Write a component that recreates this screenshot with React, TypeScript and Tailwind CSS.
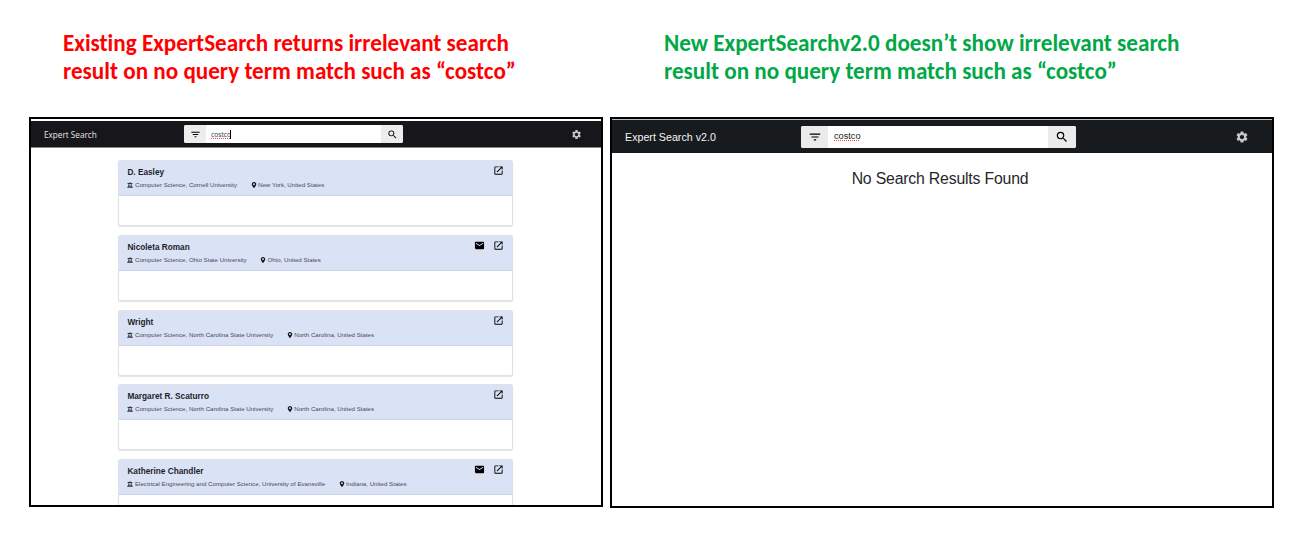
import React from "react";
import { MdEmail, MdFilterList, MdOpenInNew, MdSearch, MdSettings } from "react-icons/md";
import { FaMapMarkerAlt, FaUniversity } from "react-icons/fa";

type Expert = { name: string; dept: string; place: string; mail?: boolean };

const experts: Expert[] = [
  { name: "D. Easley", dept: "Computer Science, Cornell University", place: "New York, United States" },
  { name: "Nicoleta Roman", dept: "Computer Science, Ohio State University", place: "Ohio, United States", mail: true },
  { name: "Wright", dept: "Computer Science, North Carolina State University", place: "North Carolina, United States" },
  { name: "Margaret R. Scaturro", dept: "Computer Science, North Carolina State University", place: "North Carolina, United States" },
  { name: "Katherine Chandler", dept: "Electrical Engineering and Computer Science, University of Evansville", place: "Indiana, United States", mail: true },
];

function ExpertCard({ name, dept, place, mail }: Expert) {
  return (
    <article className="mb-[8.8px] h-[66px] w-[395.4px] shrink-0 overflow-hidden rounded-[2px] border border-[#dfe1e6] bg-white shadow-[0_1px_1px_#e4e4e8]">
      <div className="flex h-[35px] justify-between border-b border-[#cbd3e6] bg-[#dae2f6] pr-[8.4px] pl-[8.4px]">
        <div className="pt-[6px]">
          <h2 className="text-[8.25px] leading-[12px] font-bold whitespace-nowrap text-[#1d1f26]">{name}</h2>
          <div className="flex h-[12px] items-center text-[6.15px] leading-[12px] whitespace-nowrap text-[#484b55]">
            <FaUniversity className="mr-[1.6px] size-[6px] text-[#30323a]" />
            <span>{dept}</span>
            <FaMapMarkerAlt className="mr-[1.4px] ml-[13.6px] size-[6px] text-[#15161a]" />
            <span>{place}</span>
          </div>
        </div>
        <div className="flex gap-[8px] pt-[4px] text-black">
          {mail && <MdEmail className="size-[11px]" />}
          <MdOpenInNew className="size-[11px]" />
        </div>
      </div>
    </article>
  );
}

export default function App() {
  return (
    <main className="flex h-[544px] w-[1304px] gap-[7px] overflow-hidden bg-white pl-[29px] font-['Liberation_Sans',sans-serif]">
      <section className="w-[574px] shrink-0">
        <h1 className="h-[117px] pt-[29px] pl-[34px] font-['Carlito','Lato',sans-serif] text-[23.15px] leading-[28px] font-bold whitespace-nowrap text-[#ff0000] [font-variant-ligatures:none]">
          <span className="block w-fit">Existing ExpertSearch returns irrelevant search</span>
          <span className="block w-fit">result on no query term match such as “costco”</span>
        </h1>
        <div className="flex h-[390px] flex-col overflow-hidden border-2 border-black bg-white">
          <header className="mt-[2px] flex h-[27px] shrink-0 items-center border-b border-[#85858a] bg-[#17171b] pl-[13px] font-['Open_Sans',sans-serif]">
            <span className="w-[140px] pt-[2px] text-[8.2px] whitespace-nowrap text-[#e4e4e6]">Expert Search</span>
            <div className="flex h-[18px] w-[219px] overflow-hidden rounded-[2px] bg-white">
              <div className="flex w-[22px] items-center justify-center bg-[#ededee]"><MdFilterList className="size-[11px] text-black" /></div>
              <div className="flex flex-1 items-center pl-[5px] text-[6.7px] leading-[9px] text-[#333]">
                <span className="underline decoration-[#d65555] decoration-dotted decoration-1 underline-offset-1">costco</span>
                <i className="-ml-px h-[9px] w-px bg-black" />
              </div>
              <div className="flex w-[22px] items-center justify-center bg-[#ededee]"><MdSearch className="size-[11px] text-black" /></div>
            </div>
            <MdSettings className="mr-[19px] ml-auto size-[11px] text-[#c9c9cb]" />
          </header>
          <div className="flex flex-col items-start pt-[12px] pl-[87px]">
            {experts.map((expert) => <ExpertCard key={expert.name} {...expert} />)}
          </div>
        </div>
      </section>
      <section className="w-[664px] shrink-0">
        <h1 className="h-[117px] pt-[29px] pl-[54px] font-['Carlito','Lato',sans-serif] text-[23.15px] leading-[28px] font-bold whitespace-nowrap text-[#00a846] [font-variant-ligatures:none]">
          <span className="block w-fit">New ExpertSearchv2.0 doesn’t show irrelevant search</span>
          <span className="block w-fit">result on no query term match such as “costco”</span>
        </h1>
        <div className="flex h-[391px] flex-col border-2 border-black bg-white">
          <header className="flex h-[34px] shrink-0 items-center border-t border-[#b9bcbe] bg-[#171b1e] pl-[13px]">
            <span className="w-[176px] pt-px text-[10.7px] whitespace-nowrap text-[#f4f4f4]">Expert Search v2.0</span>
            <div className="flex h-[22px] w-[275px] overflow-hidden rounded-[2px] bg-white">
              <div className="flex w-[27px] items-center justify-center bg-[#ebebeb]"><MdFilterList className="size-[14px] text-black" /></div>
              <div className="flex flex-1 items-center pl-[6px] text-[9.2px] leading-[11px] text-[#222]">
                <span className="underline decoration-[#ff3b30] decoration-dotted decoration-1 underline-offset-1">costco</span>
              </div>
              <div className="flex w-[28px] items-center justify-center bg-[#ebebeb]"><MdSearch className="size-[14px] text-black" /></div>
            </div>
            <MdSettings className="mr-[23px] ml-auto size-[14px] text-[#c5c7c8]" />
          </header>
          <p className="pt-[16px] pr-[4px] text-center text-[15.8px] leading-[20px] tracking-[-0.18px] text-[#24272c]">No Search Results Found</p>
        </div>
      </section>
    </main>
  );
}
